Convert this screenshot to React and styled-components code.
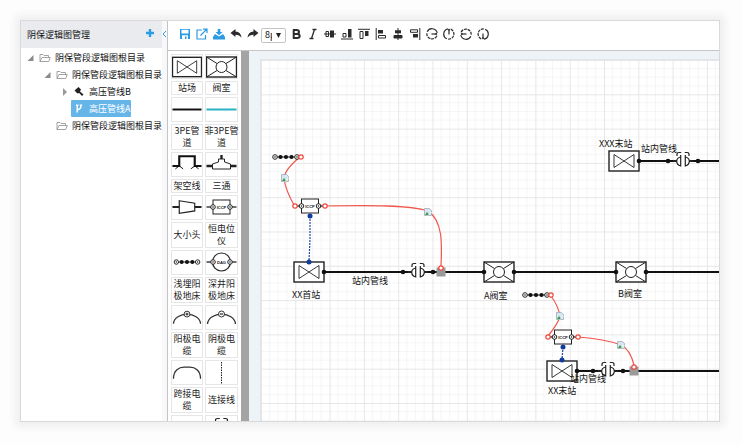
import React from "react";
import styled, { createGlobalStyle } from "styled-components";

const blue = "#2b9be3";
const ink = "#2b2b2b";

const GlobalStyle = createGlobalStyle`
  * { box-sizing: border-box; }
  body {
    margin: 0;
    background: #fdfdfd;
    color: #111;
    font: 9px/12px "Noto Sans CJK SC", sans-serif;
  }
  button, select { font: inherit; color: inherit; }
`;

const Page = styled.div`
  height: 100vh;
  padding: 20px 22px 22px 20px;
`;

const Window = styled.div`
  display: flex;
  height: 100%;
  overflow: hidden;
  background: #fff;
  border: 1px solid #d9d9d9;
  box-shadow: 0 0 8px 5px rgba(0, 0, 0, 0.06);
`;

const Sidebar = styled.aside`
  flex: 0 0 141px;
  min-width: 0;
`;

const SidebarHeader = styled.header`
  display: flex;
  align-items: center;
  justify-content: space-between;
  height: 27px;
  padding: 0 6px;
  background: #e9ebef;
`;

const Title = styled.h1`
  margin: 0;
  font-size: 9px;
  font-weight: 400;
`;

const AddButton = styled.button`
  display: flex;
  padding: 0;
  border: 0;
  background: none;
  color: ${blue};
`;

const Tree = styled.ul`
  margin: 0;
  padding: 1px 0 0;
  list-style: none;
`;

const TreeRow = styled.li`
  display: flex;
  align-items: center;
  height: 17px;
  padding-left: ${(p) => 4 + p.$level * 17}px;
`;

const Toggle = styled.span`
  display: flex;
  justify-content: center;
  flex: 0 0 12px;
`;

const TreeItem = styled.button`
  display: flex;
  align-items: center;
  gap: 4px;
  height: 17px;
  padding: 0 1px 0 2px;
  border: 0;
  border-radius: 1px;
  white-space: nowrap;
  background: ${(p) => (p.$selected ? "#66b5e9" : "none")};
  color: ${(p) => (p.$selected ? "#fff" : "#111")};
`;

const Gutter = styled.div`
  flex: 0 0 6px;
  background: #f8f8fa;
  border-right: 1px solid #c4c4c4;
`;

const Collapse = styled.button`
  display: flex;
  align-items: center;
  width: 5px;
  height: 25px;
  padding: 0;
  border: 0;
  background: none;
`;

const Main = styled.main`
  flex: 1;
  min-width: 0;
  display: flex;
  flex-direction: column;
`;

const Toolbar = styled.div`
  display: flex;
  align-items: center;
  flex: 0 0 30px;
  padding: 0 8px 3px;
  border-bottom: 1px solid #c6c6c6;
`;

const Tool = styled.button`
  display: flex;
  align-items: center;
  justify-content: center;
  flex: 0 0 17px;
  height: 17px;
  padding: 0;
  border: 0;
  background: none;
  color: ${(p) => (p.$accent ? blue : ink)};
`;

const SizePicker = styled.label`
  display: grid;
  align-items: center;
  width: 25px;
  height: 15px;
  margin: 2px 1px 0 0;
  border: 1px solid #c4c4c4;
  border-radius: 2px;
  > * { grid-area: 1 / 1; }
  > svg { justify-self: end; margin-right: 4px; pointer-events: none; }
`;

const SizeSelect = styled.select`
  appearance: none;
  width: 10px;
  height: 13px;
  padding: 0 0 0 3px;
  border: 0;
  border-radius: 0;
  background: none;
  overflow: hidden;
  text-overflow: clip;
`;

const Workspace = styled.div`
  flex: 1;
  min-height: 0;
  display: flex;
  overflow: hidden;
`;

const Palette = styled.div`
  flex: 0 0 73px;
  display: grid;
  grid-template-columns: 32px 33px;
  grid-auto-rows: max-content;
  gap: 2px;
  padding: 3px;
  overflow: hidden;
`;

const PaletteIcon = styled.button`
  display: flex;
  align-items: center;
  justify-content: center;
  height: 25px;
  padding: 0;
  border: 1px solid #e6e6e6;
  background: #fff;
`;

const PaletteLabel = styled.div`
  display: flex;
  align-items: center;
  justify-content: center;
  min-height: 14px;
  border: 1px solid #e6e6e6;
  text-align: center;
  color: #222;
  line-height: 12px;
`;

const LabelText = styled.span`
  margin: 0 -2px;
  white-space: pre-line;
`;

const Splitter = styled.div`
  flex: 0 0 8px;
  background: #a4a4a4;
`;

const Stage = styled.section`
  flex: 1;
  min-width: 0;
  padding: 8px 0 0 11px;
  background: #edf3f7;
`;

const Sheet = styled.svg`
  display: block;
  width: 100%;
  height: 100%;
  background: #fff;
  border: 1px solid #e2e5e8;
  border-width: 1px 0 0 1px;
`;

const NodeLabel = styled.text`
  font: 9px "Noto Sans CJK SC", sans-serif;
  fill: #111;
`;

const SymbolText = styled.text`
  font: 700 4px "Liberation Sans", sans-serif;
  text-anchor: middle;
  fill: #111;
`;

/* Schematic symbols, centred on 0,0 */

const Station = () => (
  <g fill="none" stroke="#222">
    <rect x="-15" y="-10" width="30" height="20" fill="#fff" strokeWidth="1.4" />
    <path d="M-10 -6.5V6.5L10 -6.5V6.5Z" strokeWidth="0.9" />
  </g>
);

const Valve = () => (
  <g fill="none" stroke="#222">
    <rect x="-15" y="-10" width="30" height="20" fill="#fff" strokeWidth="1.4" />
    <path d="M-15 -10L-4.5 -3.5M15 -10L4.5 -3.5M-15 10L-4.5 3.5M15 10L4.5 3.5" />
    <circle r="5.5" />
  </g>
);

const Terminal = ({ x, y = 0 }) => (
  <g transform={`translate(${x} ${y})`}>
    <circle r="2.3" fill="#fff" stroke="#222" />
    <circle r="0.8" fill="#222" />
  </g>
);

const Rectifier = () => (
  <g>
    <path d="M-15 0H15" stroke="#222" strokeWidth="1.3" />
    <rect x="-8.5" y="-7" width="17" height="14" fill="#fff" stroke="#222" />
    <SymbolText y="1.5">ICCP</SymbolText>
    <Terminal x={-8.5} />
    <Terminal x={8.5} />
  </g>
);

const Anode = () => (
  <g>
    <path d="M-11 0H11" stroke="#222" />
    <Terminal x={-11} />
    <Terminal x={11} />
    {[-5.5, 0, 5.5].map((x) => (
      <circle key={x} cx={x} r="2.1" fill="#111" />
    ))}
  </g>
);

const DeepAnode = () => (
  <g>
    <path d="M-15 0H15" stroke="#222" strokeWidth="1.3" />
    <circle r="9" fill="#fff" stroke="#222" strokeWidth="1.2" />
    <SymbolText y="1.5">DAG</SymbolText>
    <Terminal x={-8.5} />
    <Terminal x={8.5} />
  </g>
);

const Joint = () => (
  <g fill="none" stroke="#222" strokeWidth="1.2">
    <rect x="-7" y="-9" width="14" height="16" fill="#fff" stroke="none" />
    <path d="M-1.8 -8.5H-4Q-6 -8.5 -6 -6.5V-5M1.8 -8.5H4Q6 -8.5 6 -6.5V-5" />
    <path d="M-2.3 -6V5Q-6.3 4 -6.3 0Q-6.3 -3 -2.3 -4M2.3 -6V5Q6.3 4 6.3 0Q6.3 -3 2.3 -4" />
    <path d="M-10 0H-6M6 0H10" strokeWidth="2" />
  </g>
);

const Cable = ({ sign }) => (
  <g fill="none" stroke="#333" strokeWidth="1.3">
    <path d="M-14 6C-13 -7 13 -7 14 6" />
    <circle cy="-4" r="3" fill="#fff" strokeWidth="1" />
    <path d={sign === "+" ? "M-1.5 -4H1.5M0 -5.5V-2.5" : "M-1.5 -4H1.5"} />
  </g>
);

const symbols = {
  station: <Station />,
  valve: <Valve />,
  pipe: <path d="M-15 -0.5H15" stroke="#111" strokeWidth="2" />,
  plainPipe: <path d="M-15 -0.5H15" stroke="#29b1c4" strokeWidth="2" />,
  overhead: (
    <g fill="none" stroke="#111" strokeWidth="2.2">
      <path d="M-15 1H-8V-9H8V1H15" />
      <path d="M-12 4L-8 1L-4 4M4 4L8 1L12 4" strokeWidth="1" />
    </g>
  ),
  tee: (
    <g fill="none" stroke="#222">
      <path d="M-15 1H-9M9 1H15M0 -10V-6" strokeWidth="2.4" />
      <path d="M-9 -1L-3 -3V-6H3V-3L9 -1V4H-9Z" fill="#fff" />
    </g>
  ),
  reducer: (
    <g fill="none" stroke="#222">
      <path d="M-15 -1H-8M8 -1H15" strokeWidth="2.2" />
      <path d="M-8 -7.5L8 -5V3L-8 5.5Z" strokeWidth="1.2" />
    </g>
  ),
  rectifier: <g transform="translate(0 -1)"><Rectifier /></g>,
  anode: <g transform="translate(0 -1)"><Anode /></g>,
  deepAnode: <g transform="translate(0 -1)"><DeepAnode /></g>,
  anodeCable: <Cable sign="+" />,
  cathodeCable: <Cable sign="-" />,
  bridge: <path d="M-14 6C-14 -3 -8 -6 -3 -6H3C8 -6 14 -3 14 6" fill="none" stroke="#333" strokeWidth="1.3" />,
  link: <path d="M0 -11V11" stroke="#222" strokeDasharray="1.5 1" />,
  blank: null,
  joint: <g transform="translate(0 -1)"><Joint /></g>,
};

const paletteRows = [
  ["station", "站场", "valve", "阀室"],
  ["pipe", "3PE管\n道", "plainPipe", "非3PE管\n道"],
  ["overhead", "架空线", "tee", "三通"],
  ["reducer", "大小头", "rectifier", "恒电位\n仪"],
  ["anode", "浅埋阳\n极地床", "deepAnode", "深井阳\n极地床"],
  ["anodeCable", "阳极电\n缆", "cathodeCable", "阴极电\n缆"],
  ["bridge", "跨接电\n缆", "link", "连接线"],
  ["blank", "", "joint", ""],
];

const PaletteSymbol = ({ name, label }) => (
  <PaletteIcon aria-label={label.replace("\n", "") || name}>
    <svg width="31" height="23" viewBox="-15.5 -12 31 23">{symbols[name]}</svg>
  </PaletteIcon>
);

/* Interface icons */

const Icon = ({ children }) => (
  <svg width="12" height="12" viewBox="0 0 12 12" fill="none" stroke="currentColor" strokeWidth="1.2" aria-hidden="true">
    {children}
  </svg>
);

const Folder = () => (
  <svg width="12" height="10" viewBox="0 0 12 10" fill="#fff" stroke="#999" strokeWidth="0.9" aria-hidden="true">
    <path d="M1 8.5V1.5H4L5 2.5H9.5V4.5M1 8.5L3 4.5H11.3L9.7 8.5Z" />
  </svg>
);

const Pump = () => (
  <svg width="12" height="11" viewBox="0 0 12 11" fill="#222" aria-hidden="true">
    <path d="M5.5 1L8 3.5L7 5.5L10.5 8.5L9 10L6.2 7L4.5 7.5L1.5 4.5Z" />
  </svg>
);

const Branch = () => (
  <svg width="12" height="11" viewBox="0 0 12 11" fill="none" stroke="#fff" strokeWidth="1.4" aria-hidden="true">
    <path d="M4.2 2V9.5M4.2 6.8Q8 6.5 8 2.5" />
    <path d="M3 2.3H5.4M6.8 2.3H9.2" />
  </svg>
);

const arrows = {
  open: <path d="M6.5 1V7H0.5Z" fill="#8b8b8b" />,
  closed: <path d="M2 0L6 4L2 8Z" fill="#999" />,
};

const treeItems = [
  { level: 0, arrow: "open", icon: <Folder />, label: "阴保管段逻辑图根目录" },
  { level: 1, arrow: "open", icon: <Folder />, label: "阴保管段逻辑图根目录" },
  { level: 2, arrow: "closed", icon: <Pump />, label: "高压管线B" },
  { level: 2, icon: <Branch />, label: "高压管线A", selected: true },
  { level: 1, icon: <Folder />, label: "阴保管段逻辑图根目录" },
];

const solid = { fill: "currentColor", stroke: "none" };

const fileTools = [
  ["保存", <path {...solid} fillRule="evenodd" d="M1 1H11V11H1ZM2.5 1.8V5.5H9.5V1.8ZM3 7.2V11H6V8.5H7.5V11H9V7.2Z" />],
  ["导出", <path d="M6 2H1V11H9.5V7M4.5 7.5L10.5 1.5M7 1.2H11V5" />],
  ["下载", <g {...solid}><path d="M4.7 1H7.3V4H9.5L6 7.3L2.5 4H4.7Z" /><path d="M2 6L6 8.5L10 6L12 9V11.5H0V9Z" /></g>],
];

const historyTools = [
  ["撤销", <path {...solid} d="M0.5 5L5.5 1V3.4Q11 3.7 11.5 9.8Q9.5 6.7 5.5 6.7V9Z" />],
  ["重做", <path {...solid} d="M11.5 5L6.5 1V3.4Q1 3.7 0.5 9.8Q2.5 6.7 6.5 6.7V9Z" />],
];

const Dial = ({ angle }) => (
  <g transform={`rotate(${angle} 6 6)`}>
    <path d="M11.2 5A5.3 5.3 0 0 0 1.2 3.8" />
    <path d="M0.8 5.2A5.3 5.3 0 0 0 11.2 7" strokeDasharray="3 0.8" />
    <path d="M5.5 6H10" />
    <circle cx="10.2" cy="6" r="1" {...solid} />
  </g>
);

const editTools = [
  ["加粗", <path strokeWidth="2" d="M3 2H6.5Q9 2 9 4Q9 6 6.5 6H3.5H7Q9.7 6 9.7 8Q9.7 10 7 10H3M3.7 1.5V10.5" />],
  ["斜体", <path strokeWidth="1.3" d="M5.5 1.5H9.5M2.5 10.5H6.5M7.5 1.5L4.5 10.5" />],
  ["垂直居中", <g><path d="M0 6H12M2 3.5H4.5V8.5H2Z" strokeWidth="1" /><path {...solid} d="M6 2.5H10V9.5H6Z" /></g>],
  ["底部对齐", <g><path d="M0 11H12M2 5.5H5V9H2Z" strokeWidth="1" /><path {...solid} d="M7 1H10.5V9.5H7Z" /></g>],
  ["顶部对齐", <g><path d="M0 1.3H12M2 3.5H5V10.5H2Z" strokeWidth="1" /><path {...solid} d="M7 3H10.5V8H7Z" /></g>],
  ["左对齐", <g><path d="M1.2 0V12M3.5 7.5H10.5V10H3.5Z" strokeWidth="1" /><path {...solid} d="M3 2H8V5.5H3Z" /></g>],
  ["水平居中", <g><path d="M6 0V12M2 7.5H10V10H2Z" strokeWidth="1" /><path {...solid} d="M3 2.3H9V5.3H3ZM2 7.5H10V10H2Z" /></g>],
  ["右对齐", <g><path d="M10.8 0V12M1.5 1.8H8.5V4.3H1.5Z" strokeWidth="1" /><path {...solid} d="M4 6H9V9.5H4Z" /></g>],
  ["旋转0度", <Dial angle={0} />],
  ["旋转90度", <Dial angle={-90} />],
  ["旋转180度", <Dial angle={180} />],
  ["旋转270度", <Dial angle={90} />],
];

const Tools = ({ items, accent }) =>
  items.map(([name, drawing]) => (
    <Tool key={name} $accent={accent} aria-label={name} title={name}>
      <Icon>{drawing}</Icon>
    </Tool>
  ));

/* Diagram */

const At = ({ x, y, children }) => <g transform={`translate(${x} ${y})`}>{children}</g>;

const Dots = ({ xs, y }) => xs.map((x) => <circle key={x} cx={x} cy={y} r="2.3" fill="#111" />);

const RedEnd = ({ x, y }) => <circle cx={x} cy={y} r="2.2" fill="#fff" stroke="#f0473c" strokeWidth="1.2" />;

const Picture = ({ x, y }) => (
  <At x={x} y={y}>
    <path d="M-3.5 -3.5H1.5L3.5 -1.5V3.5H-3.5Z" fill="#d7e6f2" stroke="#9eabb6" strokeWidth="0.8" />
    <path d="M-3 3L-1 0L1.5 3Z" fill="#3ba04a" />
    <path d="M3.5 0L0 3.5" stroke="#fff" />
  </At>
);

const Drain = ({ x, y }) => (
  <g>
    <rect x={x - 4.5} y={y - 4.5} width="9" height="9" fill="#999" />
    <RedEnd x={x} y={y - 4} />
  </g>
);

const Grid = () => (
  <g>
    <defs>
      <pattern id="grid" width="34.3" height="34.3" patternUnits="userSpaceOnUse">
        <path d="M8.6 0V34.3M17.2 0V34.3M25.8 0V34.3M0 8.6H34.3M0 17.2H34.3M0 25.8H34.3" stroke="#f5f5f5" />
        <path d="M0 0H34.3M0 0V34.3" stroke="#e6e6e6" strokeWidth="2" />
      </pattern>
    </defs>
    <rect width="100%" height="100%" fill="url(#grid)" />
  </g>
);

const Diagram = () => (
  <Sheet role="img" aria-label="阴保逻辑图">
    <Grid />
    <g transform="translate(-1 -1)">
      <g stroke="#111" strokeWidth="2.2">
        <line x1="64" y1="213" x2="101%" y2="213" />
        <line x1="317" y1="312" x2="101%" y2="312" />
        <line x1="379" y1="102" x2="101%" y2="102" />
      </g>

      <At x={49} y={213}><Station /></At>
      <At x={239} y={213}><Valve /></At>
      <At x={371} y={213}><Valve /></At>
      <At x={302} y={312}><Station /></At>
      <At x={364} y={102}><Station /></At>
      <At x={158} y={213}><Joint /></At>
      <At x={348} y={312}><Joint /></At>
      <At x={423} y={102}><Joint /></At>
      <Dots xs={[64, 143, 173, 224, 254, 356, 386]} y={213} />
      <Dots xs={[317, 333, 363]} y={312} />
      <Dots xs={[379, 408, 438]} y={102} />

      <g fill="none" stroke="#2448a8" strokeWidth="1.2" strokeDasharray="2 1">
        <path d="M50 157V180L49 202M303 288L302 301" />
      </g>
      <g fill="#123c9c">
        <circle cx="50" cy="157" r="2.5" />
        <circle cx="49" cy="203" r="2.5" />
        <circle cx="303" cy="288" r="2.5" />
        <circle cx="302" cy="301" r="2.5" />
      </g>

      <g fill="none" stroke="#f0564b" strokeWidth="1.2">
        <path d="M40 98Q24 111 24 120Q26 132 34 146" />
        <path d="M65 147C110 146 150 146 168 152C183 162 182 185 181 207" />
        <path d="M291 237Q299 248 300 258Q297 266 288 277" />
        <path d="M318 278Q345 280 361 286Q370 290 374 306" />
      </g>
      <At x={26} y={98}><Anode /></At>
      <At x={276} y={236}><Anode /></At>
      <At x={50} y={147}><Rectifier /></At>
      <At x={303} y={278}><Rectifier /></At>
      <RedEnd x={41} y={98} />
      <RedEnd x={35} y={147} />
      <RedEnd x={65} y={147} />
      <RedEnd x={291} y={236} />
      <RedEnd x={288} y={278} />
      <RedEnd x={318} y={278} />
      <Drain x={181} y={213} />
      <Drain x={374} y={312} />
      <Picture x={25} y={119} />
      <Picture x={168} y={153} />
      <Picture x={300} y={257} />
      <Picture x={361} y={286} />

      <NodeLabel x="32" y="239">XX首站</NodeLabel>
      <NodeLabel x="92" y="225">站内管线</NodeLabel>
      <NodeLabel x="224" y="240">A阀室</NodeLabel>
      <NodeLabel x="358" y="238">B阀室</NodeLabel>
      <NodeLabel x="288" y="335">XX末站</NodeLabel>
      <NodeLabel x="310" y="323">站内管线</NodeLabel>
      <NodeLabel x="339" y="88">XXX末站</NodeLabel>
      <NodeLabel x="381" y="93">站内管线</NodeLabel>
    </g>
  </Sheet>
);

export default function App() {
  return (
    <Page>
      <GlobalStyle />
      <Window>
        <Sidebar>
          <SidebarHeader>
            <Title>阴保逻辑图管理</Title>
            <AddButton aria-label="添加">
              <Icon><path d="M6 0V8M2 4H10" strokeWidth="2.4" /></Icon>
            </AddButton>
          </SidebarHeader>
          <Tree>
            {treeItems.map((item, i) => (
              <TreeRow key={i} $level={item.level}>
                <Toggle>
                  {item.arrow && <svg width="8" height="8" viewBox="0 0 8 8">{arrows[item.arrow]}</svg>}
                </Toggle>
                <TreeItem $selected={item.selected}>
                  {item.icon}
                  {item.label}
                </TreeItem>
              </TreeRow>
            ))}
          </Tree>
        </Sidebar>
        <Gutter>
          <Collapse aria-label="收起">
            <svg width="5" height="8" viewBox="0 0 5 8" fill="none" stroke={blue}><path d="M4 1L1 4L4 7" /></svg>
          </Collapse>
        </Gutter>
        <Main>
          <Toolbar>
            <Tools items={fileTools} accent />
            <Tools items={historyTools} />
            <SizePicker>
              <SizeSelect aria-label="字号" defaultValue="8px">
                <option>8px</option>
                <option>10px</option>
                <option>12px</option>
              </SizeSelect>
              <svg width="5" height="5" viewBox="0 0 5 5"><path d="M0 0H5L2.5 5Z" fill="#222" /></svg>
            </SizePicker>
            <Tools items={editTools} />
          </Toolbar>
          <Workspace>
            <Palette>
              {paletteRows.map(([a, labelA, b, labelB]) => (
                <React.Fragment key={b}>
                  <PaletteSymbol name={a} label={labelA} />
                  <PaletteSymbol name={b} label={labelB} />
                  {labelA && <PaletteLabel><LabelText>{labelA}</LabelText></PaletteLabel>}
                  {labelB && <PaletteLabel><LabelText>{labelB}</LabelText></PaletteLabel>}
                </React.Fragment>
              ))}
            </Palette>
            <Splitter />
            <Stage>
              <Diagram />
            </Stage>
          </Workspace>
        </Main>
      </Window>
    </Page>
  );
}
